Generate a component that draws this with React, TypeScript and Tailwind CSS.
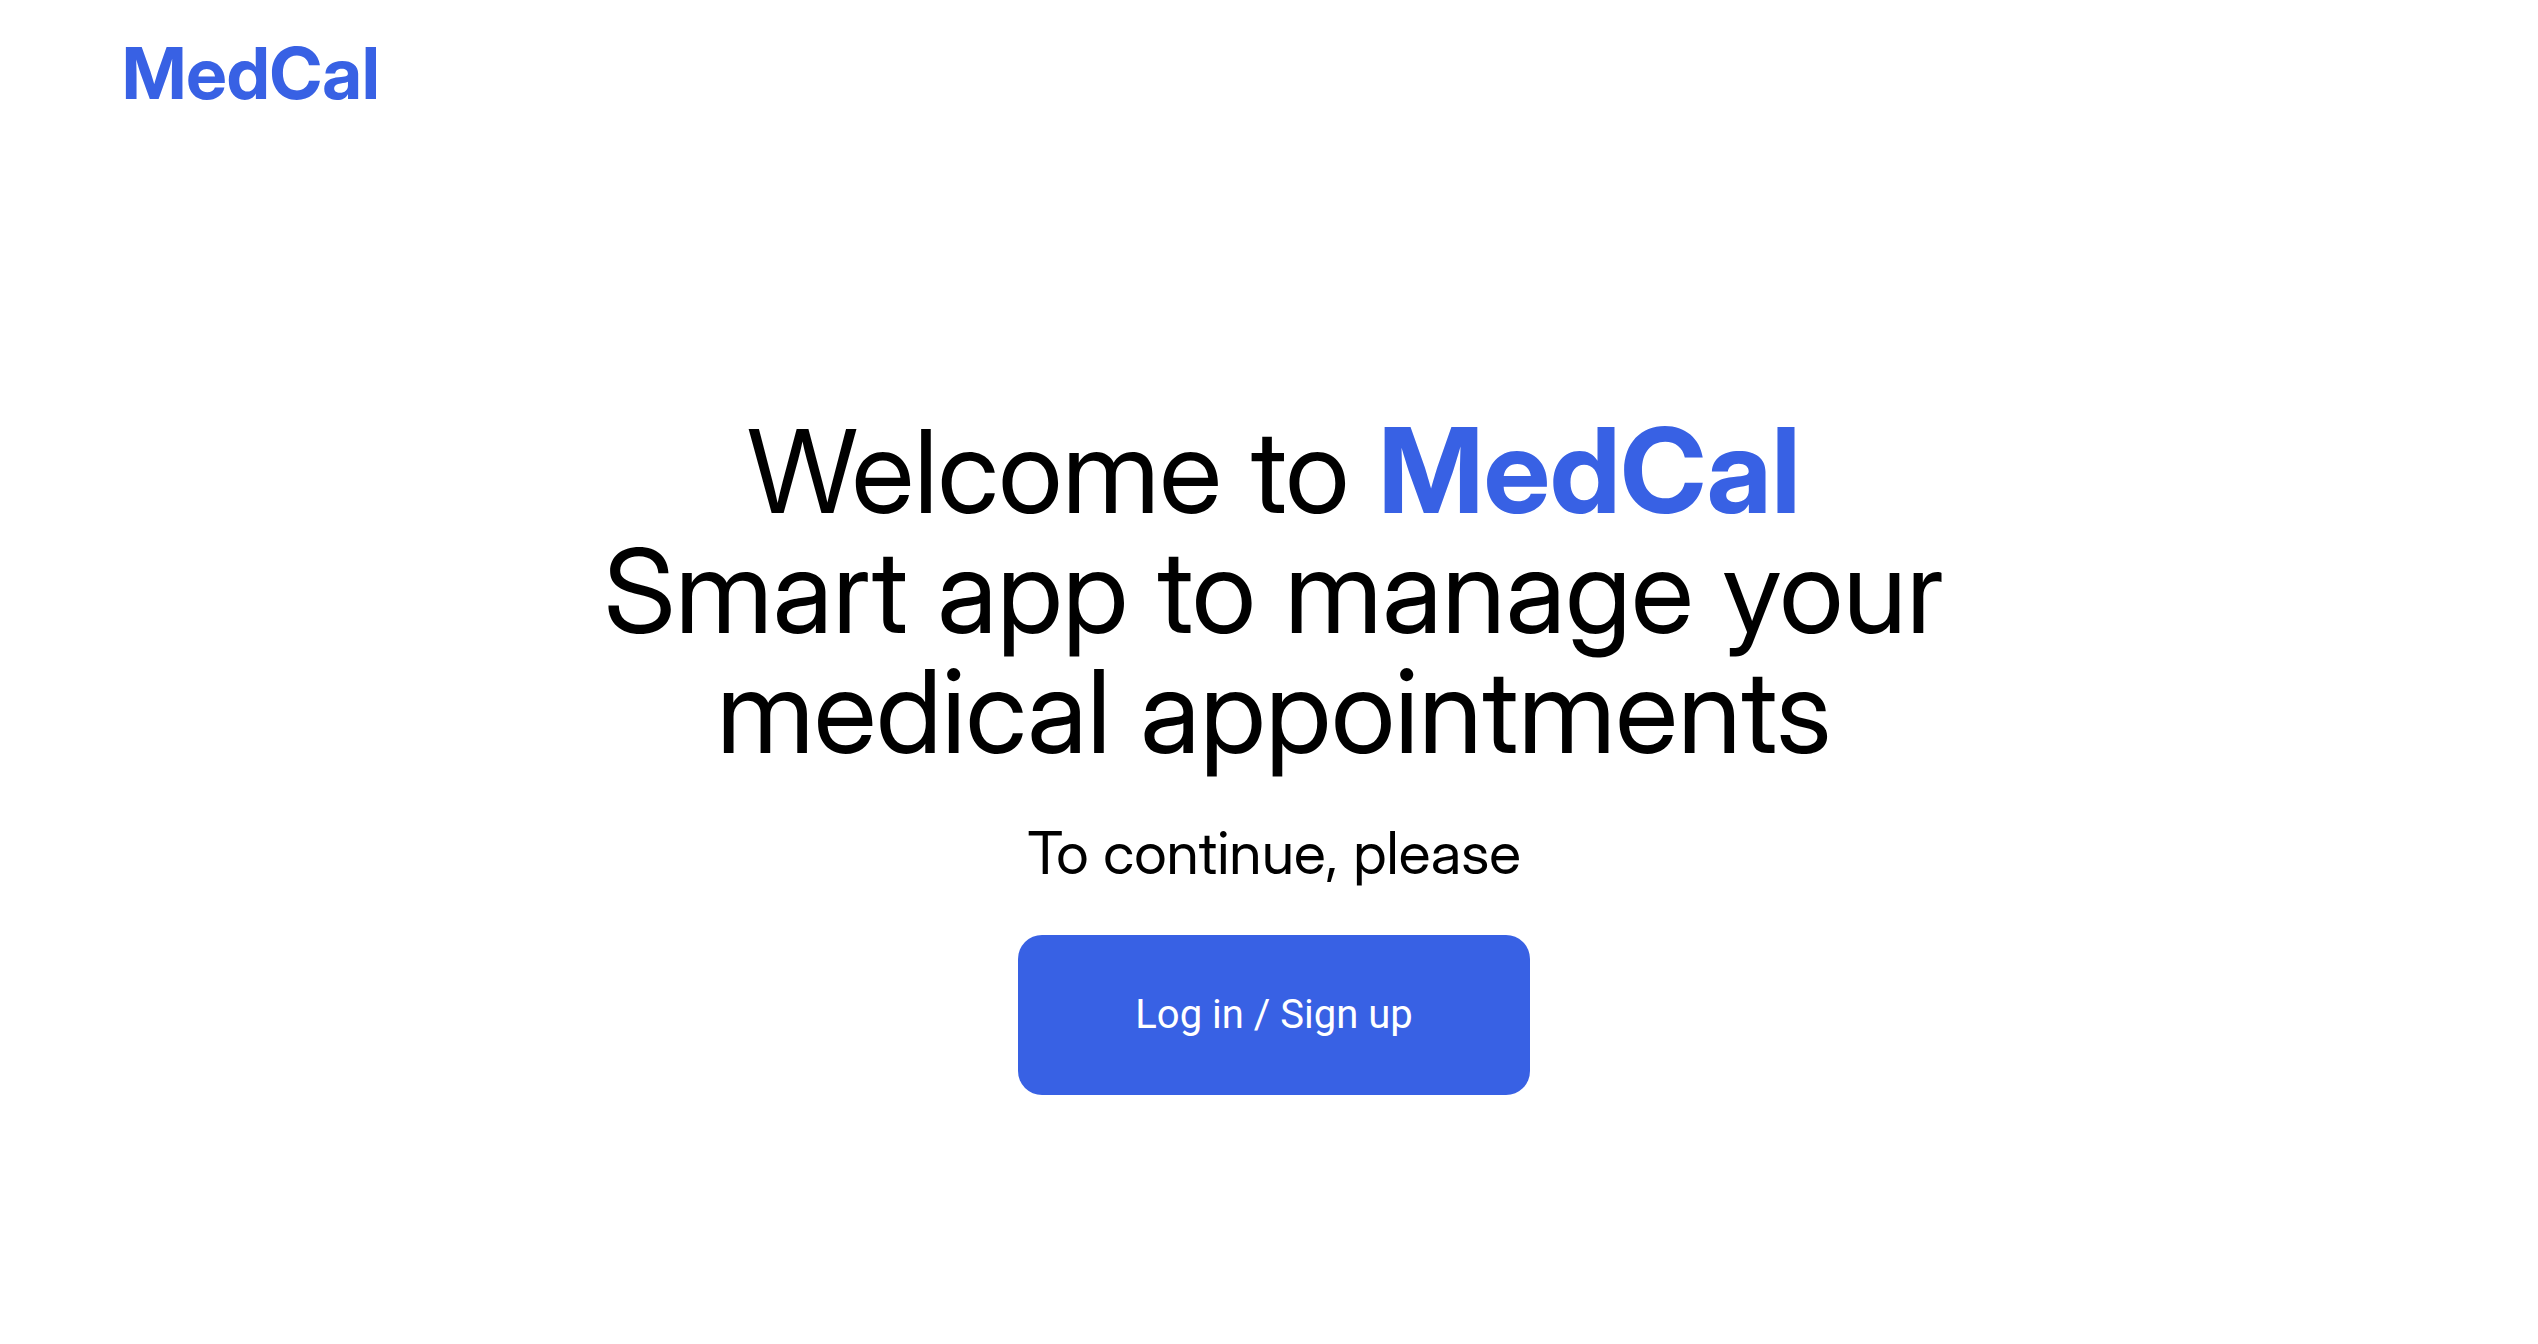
export default function App() {
  return (
    <div className="flex min-h-screen flex-col bg-white font-['Inter_Display','Inter',sans-serif] text-black">
      <header className="px-[122px] pt-[35px]">
        <a href="#" className="text-[72px] leading-[76px] font-bold text-[#3861e4]">MedCal</a>
      </header>
      <main className="flex flex-1 flex-col items-center pt-[299px] pl-[10px] text-center">
        <h1 className="text-[116px] leading-[120px]">
          Welcome to <strong className="text-[118px] font-bold text-[#3861e4]">MedCal</strong>
          <br />
          Smart app to manage your
          <br />
          medical appointments
        </h1>
        <p className="mt-[46px] text-[59px] leading-[72px]">To continue, please</p>
        <button type="button" className="mt-[46px] rounded-3xl bg-[#3861e4] px-[117px] py-[56px] font-['Roboto',sans-serif] text-[40px] leading-[48px] text-white">
          Log in / Sign up
        </button>
      </main>
    </div>
  );
}
